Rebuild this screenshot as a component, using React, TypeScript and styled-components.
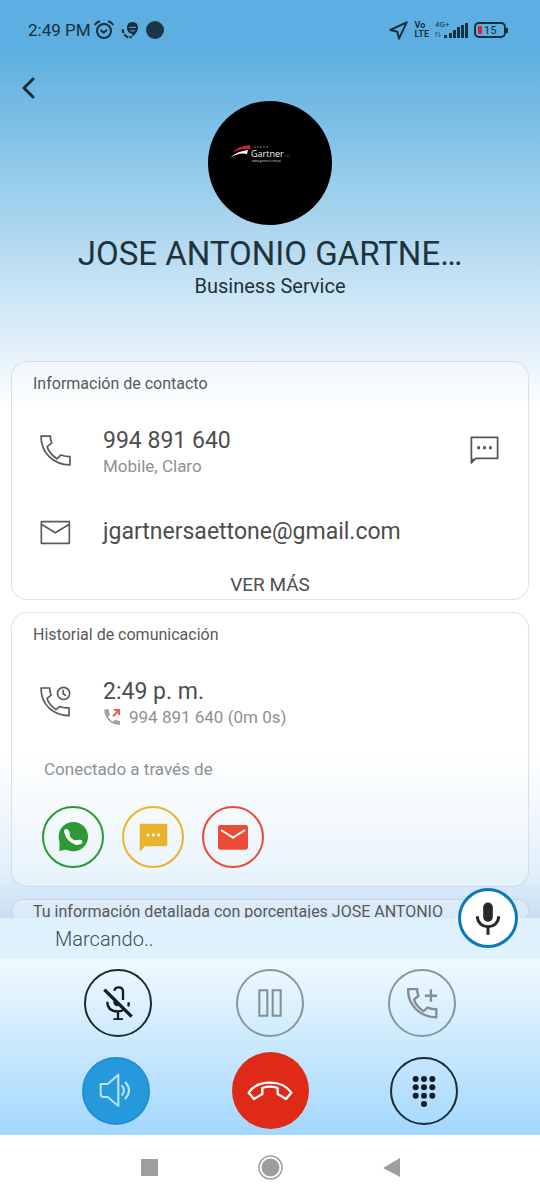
import React from "react";
import styled, { createGlobalStyle, css } from "styled-components";

const GlobalStyle = createGlobalStyle`
  *, *::before, *::after { box-sizing: border-box; }
  body { margin: 0; font-family: Roboto, "Liberation Sans", sans-serif; background: #fff; }
  button { font: inherit; color: inherit; background: none; border: 0; padding: 0; cursor: pointer; }
  svg { display: block; flex: none; }
  h1, h2, p { margin: 0; font-weight: 400; }
`;

const Screen = styled.div`
  display: flex;
  flex-direction: column;
  height: 100vh;
`;

const Content = styled.main`
  flex: 1 1 0;
  min-height: 0;
  overflow: hidden;
  background: linear-gradient(#5cafe0 50px, #fff 412px, #fff calc(100% - 165px), #e2f1fc calc(100% - 50px), #c8def4 100%);
`;

const StatusBar = styled.div`
  display: flex;
  align-items: center;
  justify-content: space-between;
  height: 60px;
  padding: 0 31px 0 28px;
  color: #16303f;
`;

const StatusGroup = styled.div<{ $gap: number }>`
  display: flex;
  align-items: center;
  gap: ${(p) => p.$gap}px;
`;

const Clock = styled.time`
  font-size: 17px;
  line-height: 20px;
  margin-right: -4px;
`;

const VoLte = styled.span`
  display: grid;
  font-size: 9px;
  line-height: 9px;
  font-weight: 700;
`;

const Header = styled.header`
  display: grid;
  grid-template-columns: 58px 1fr 58px;
  justify-items: center;
`;

const BackButton = styled.button`
  display: grid;
  place-items: center;
  width: 56px;
  height: 56px;
`;

const Avatar = styled.div`
  width: 124px;
  height: 124px;
  margin-top: 41px;
  border-radius: 50%;
  background: #000;
  overflow: hidden;
`;

const Identity = styled.div`
  margin: 9px 16px 0;
  text-align: center;
  color: #21323b;
`;

const Name = styled.h1`
  font-size: 33px;
  line-height: 40px;
  white-space: nowrap;
`;

const Tagline = styled.p`
  font-size: 20px;
  line-height: 24px;
`;

const Cards = styled.div`
  display: flex;
  flex-direction: column;
  gap: 12px;
  margin: 63px 11px 0;
`;

const Card = styled.section<{ $tight?: boolean }>`
  flex: none;
  padding: ${(p) => (p.$tight ? 2 : 12)}px 21px 0;
  border: 1px solid rgba(120, 120, 120, 0.2);
  border-radius: 16px;
  background: rgba(255, 255, 255, 0.3);
  overflow: hidden;
`;

const CardTitle = styled.h2`
  font-size: 16px;
  line-height: 20px;
  color: #56595c;
  white-space: nowrap;
`;

const Row = styled.div<{ $space: number; $twoLines?: boolean }>`
  display: grid;
  grid-template-columns: 46px 1fr auto;
  column-gap: 17px;
  align-items: center;
  margin-top: ${(p) => p.$space}px;
  padding: 0 8px 0 7px;

  > svg,
  > button {
    margin-bottom: ${(p) => (p.$twoLines ? 4 : 0)}px;
  }
`;

const Primary = styled.p`
  font-size: 23px;
  line-height: 28px;
  color: #4d4d4d;
`;

const Secondary = styled.p`
  display: flex;
  align-items: center;
  gap: 8px;
  font-size: 17px;
  line-height: 22px;
  color: #8d9194;
`;

const MoreButton = styled.button`
  display: block;
  margin: 27px auto 2px;
  font-size: 19px;
  line-height: 24px;
  color: #4f4f4f;
`;

const Via = styled.p`
  margin: 31px 0 0 11px;
  font-size: 17px;
  line-height: 20px;
  color: #8d9194;
`;

const Channels = styled.div`
  display: flex;
  gap: 18px;
  margin: 27px 0 18px 9px;
`;

const Channel = styled.button<{ $tone: string }>`
  display: grid;
  place-items: center;
  width: 62px;
  height: 62px;
  border: 2px solid ${(p) => p.$tone};
  border-radius: 50%;
  color: ${(p) => p.$tone};
`;

const CallPanel = styled.section`
  position: relative;
  flex: none;
`;

const Dialing = styled.p`
  padding: 9px 55px 7px;
  font-size: 20px;
  line-height: 25px;
  font-weight: 300;
  color: #3f4d56;
  background: #dff2fe;
`;

const VoiceButton = styled.button`
  position: absolute;
  top: -30px;
  right: 22px;
  display: grid;
  place-items: center;
  width: 60px;
  height: 60px;
  border: 3px solid #0a78bc;
  border-radius: 50%;
  background: #fff;
`;

const Controls = styled.div`
  display: grid;
  gap: 15px;
  padding: 10px 0 6px;
  background: linear-gradient(#f0faff, #a3d7fd);
`;

const ControlRow = styled.div`
  display: flex;
  align-items: center;
  justify-content: space-evenly;
`;

type Kind = "dark" | "muted" | "active" | "end";

const kinds = {
  dark: css`border: 2px solid #1d2b35; color: #111c23;`,
  muted: css`border: 2px solid #8a959c; color: #858d92;`,
  active: css`border: 2px solid #1f8fd0; background: #2599dc; color: #bfe5fb;`,
  end: css`background: #de2a17; color: #fff;`,
};

const Control = styled.button<{ $kind: Kind }>`
  display: grid;
  place-items: center;
  width: ${(p) => (p.$kind === "end" ? 77 : 68)}px;
  height: ${(p) => (p.$kind === "end" ? 77 : 68)}px;
  border-radius: 50%;
  ${(p) => kinds[p.$kind]}
`;

const NavBar = styled.nav`
  display: flex;
  flex: none;
  justify-content: center;
  align-items: center;
  gap: 81px;
  height: 65px;
  background: #fff;
  color: #9e9e9e;
`;

const NavButton = styled.button`
  display: grid;
  place-items: center;
  width: 40px;
  height: 40px;
`;

type IconProps = { w: number; h: number; box: string; sw?: number; fill?: string; children: React.ReactNode };

const Icon = ({ w, h, box, sw = 0, fill = "none", children }: IconProps) => (
  <svg
    width={w}
    height={h}
    viewBox={box}
    fill={fill}
    stroke={sw ? "currentColor" : "none"}
    strokeWidth={sw}
    strokeLinejoin="round"
    aria-hidden="true"
  >
    {children}
  </svg>
);

const HANDSET = "M3 3H30Q30 14 34 23L21 34Q25 52 49 69L61 58Q73 63 87 63V87C38 86 3 52 3 3Z";

const AvatarLogo = () => (
  <svg width="124" height="124" viewBox="0 0 124 124" role="img" aria-label="Gartner">
    <path d="M24 52Q30 45 42 44V48Q33 47 24 52Z" fill="#d8232a" />
    <path d="M22 57Q29 50 40 49L39 53Q31 51 22 57Z" fill="#fff" />
    <path d="M46 46H60" stroke="#777" strokeWidth="1" strokeDasharray="2 1" />
    <text x="43" y="56" fontSize="9" fontFamily="Open Sans, sans-serif" fill="#f4f4f4">Gartner</text>
    <text x="76" y="56" fontSize="3" fontFamily="Open Sans, sans-serif" fill="#555">S.A.C</text>
    <text x="44" y="61" fontSize="3" fontFamily="Open Sans, sans-serif" fill="#ddd">www.gartner.com.pe</text>
  </svg>
);

export default function App() {
  return (
    <>
      <GlobalStyle />
      <Screen>
        <Content>
          <StatusBar>
            <StatusGroup $gap={7}>
              <Clock>2:49 PM</Clock>
              <Icon w={20} h={20} box="0 0 60 60" sw={6}>
                <circle cx="30" cy="33" r="21" />
                <path d="M2 15Q8 6 18 4M58 15Q52 6 42 4M20 30L29 38L39 29" />
              </Icon>
              <Icon w={18} h={18} box="0 0 54 54" fill="currentColor">
                <path d="M18 22Q18 3 34 3Q51 3 51 20Q51 34 34 47V39Q18 37 18 22Z" />
                <path d="M24 19H45M28 28Q34 34 41 28" stroke="#5cafe0" strokeWidth="3" fill="none" />
                <path d="M5 25Q5 31 8 36M10 40Q15 47 22 49M27 46L31 51" stroke="currentColor" strokeWidth="7" fill="none" />
              </Icon>
              <Icon w={18} h={18} box="0 0 18 18" fill="#1c3547">
                <circle cx="9" cy="9" r="9" />
              </Icon>
            </StatusGroup>
            <StatusGroup $gap={6}>
              <Icon w={19} h={19} box="0 0 57 57" sw={6}>
                <path d="M4 27L53 4L30 53L25 32Z" />
              </Icon>
              <VoLte>
                <span>Vo</span>
                <span>LTE</span>
              </VoLte>
              <svg width="33" height="20" viewBox="0 0 33 20" fill="currentColor" role="img" aria-label="Señal 4G+">
                <text x="0" y="7" fontSize="8">4G+</text>
                <path d="M1 13V17M0 14L1 12L3 14M4 12V17M6 15L4 17" stroke="currentColor" strokeWidth="1" fill="none" opacity=".5" />
                <path d="M9 15h3v3h-3zM14 13h3v5h-3zM18 10h3v8h-3zM22 7h3v11h-3zM26 5h3v13h-3zM30 3h3v15h-3z" />
              </svg>
              <svg width="35" height="17" viewBox="0 0 35 17" role="img" aria-label="Batería 15 %">
                <rect x="1" y="1" width="30" height="14" rx="4" fill="none" stroke="currentColor" strokeWidth="2" />
                <path d="M33 6V11" stroke="currentColor" strokeWidth="2" />
                <rect x="4" y="4" width="4" height="8" rx="1" fill="#e8202a" />
                <text x="10" y="12" fontSize="11" fill="currentColor">15</text>
              </svg>
            </StatusGroup>
          </StatusBar>

          <Header>
            <BackButton aria-label="Volver">
              <Icon w={14} h={22} box="0 0 14 22" sw={3}>
                <path d="M11 2L2 11L11 20" strokeLinecap="round" stroke="#1b2c36" />
              </Icon>
            </BackButton>
            <Avatar>
              <AvatarLogo />
            </Avatar>
          </Header>
          <Identity>
            <Name>JOSE ANTONIO GARTNE…</Name>
            <Tagline>Business Service</Tagline>
          </Identity>

          <Cards>
            <Card>
              <CardTitle>Información de contacto</CardTitle>
              <Row $space={33} $twoLines>
                <Icon w={31} h={31} box="0 0 90 90" sw={5}>
                  <path d={HANDSET} stroke="#5a5a5a" />
                </Icon>
                <div>
                  <Primary>994 891 640</Primary>
                  <Secondary>Mobile, Claro</Secondary>
                </div>
                <button aria-label="Enviar mensaje">
                  <Icon w={29} h={29} box="0 0 84 84" sw={5}>
                    <path d="M4 4H80V65H16L4 78Z" stroke="#555" />
                    <path d="M4 66H15L4 78Z" fill="#555" stroke="none" />
                    <path d="M21 34H29M38 34H46M55 34H63" stroke="#555" strokeWidth="9" />
                  </Icon>
                </button>
              </Row>
              <Row $space={41}>
                <Icon w={31} h={25} box="0 0 93 75" sw={5}>
                  <path d="M4 5H88V70H4ZM4 13L46 38L88 13" stroke="#5a5a5a" />
                </Icon>
                <Primary>jgartnersaettone@gmail.com</Primary>
              </Row>
              <MoreButton>VER MÁS</MoreButton>
            </Card>

            <Card>
              <CardTitle>Historial de comunicación</CardTitle>
              <Row $space={33} $twoLines>
                <Icon w={31} h={31} box="0 0 92 92" sw={5}>
                  <g stroke="#5a5a5a">
                    <path d="M3 6H29Q29 18 33 27L21 37Q26 54 47 70L58 61Q70 66 86 65V88C40 87 3 57 3 6Z" />
                    <circle cx="70" cy="22" r="18" />
                    <path d="M69 11V23L77 29" />
                  </g>
                </Icon>
                <div>
                  <Primary>2:49 p. m.</Primary>
                  <Secondary>
                    <Icon w={18} h={18} box="0 0 54 54">
                      <path d="M4 4H15Q18 4 18 8Q18 15 21 20L15 27Q22 37 30 41L37 35Q43 38 49 38Q51 38 51 41V51C23 51 3 30 4 4Z" fill="#a0a3a5" />
                      <path d="M30 25L45 9M33 6H48V21" stroke="#e8614b" strokeWidth="6" strokeLinejoin="miter" />
                    </Icon>
                    994 891 640 (0m 0s)
                  </Secondary>
                </div>
              </Row>
              <Via>Conectado a través de</Via>
              <Channels>
                <Channel $tone="#2b9a33" aria-label="WhatsApp">
                  <Icon w={30} h={30} box="0 0 90 90" fill="currentColor">
                    <circle cx="46" cy="44" r="44" />
                    <path d="M5 57L4 87L34 80Z" />
                    <path d="M25 28L29 36M55 62L66 60" stroke="#fff" strokeWidth="14" strokeLinecap="round" />
                    <path d="M25 30Q29 56 57 63" stroke="#fff" strokeWidth="11" fill="none" />
                  </Icon>
                </Channel>
                <Channel $tone="#eab32d" aria-label="Mensaje">
                  <Icon w={29} h={29} box="0 0 87 87" fill="currentColor">
                    <path d="M6 2H80Q85 2 85 7V65Q85 70 80 70H18L2 86V7Q2 2 6 2Z" />
                    <path d="M23 36H31M39 36H47M55 36H63" stroke="#fff" strokeWidth="8" />
                  </Icon>
                </Channel>
                <Channel $tone="#eb4b37" aria-label="Correo">
                  <Icon w={30} h={25} box="0 0 90 75" fill="currentColor">
                    <rect width="90" height="74" rx="7" />
                    <path d="M9 15L45 38L81 15" stroke="#fff" strokeWidth="6" fill="none" />
                  </Icon>
                </Channel>
              </Channels>
            </Card>

            <Card $tight>
              <CardTitle>Tu información detallada con porcentajes JOSE ANTONIO</CardTitle>
            </Card>
          </Cards>
        </Content>

        <CallPanel>
          <Dialing>Marcando..</Dialing>
          <VoiceButton aria-label="Hablar">
            <Icon w={24} h={33} box="0 0 72 99" sw={9}>
              <g stroke="#292929">
                <rect x="26" y="6" width="20" height="49" rx="10" fill="#292929" />
                <path d="M4 43C4 85 68 85 68 43M36 75V98" />
              </g>
            </Icon>
          </VoiceButton>
          <Controls>
            <ControlRow>
              <Control $kind="dark" aria-label="Silenciar">
                <Icon w={30} h={34} box="0 0 90 102" sw={7}>
                  <path d="M34 14Q36 4 47 4Q60 4 60 17V42" />
                  <path d="M31 35V47Q31 58 42 61L53 57Z" fill="currentColor" stroke="none" />
                  <path d="M13 47Q13 76 45 76Q58 76 65 69M77 49V53Q77 58 75 61M45 76V100M31 100H60" />
                  <path d="M4 11L86 92" strokeWidth="10" />
                </Icon>
              </Control>
              <Control $kind="muted" aria-label="Poner en espera">
                <Icon w={24} h={28} box="0 0 72 84" sw={6}>
                  <path d="M4 4H28V80H4ZM44 4H68V80H44Z" strokeLinejoin="miter" />
                </Icon>
              </Control>
              <Control $kind="muted" aria-label="Añadir llamada">
                <Icon w={31} h={31} box="0 0 92 92" sw={7}>
                  <path d={HANDSET} />
                  <path d="M71 4V41M53 23H89" />
                </Icon>
              </Control>
            </ControlRow>
            <ControlRow>
              <Control $kind="active" aria-label="Altavoz">
                <Icon w={33} h={35} box="0 0 99 105" sw={6}>
                  <path d="M5 33H26L58 5V99L26 72H14Q5 72 5 63Z" />
                  <path d="M68 37Q82 52 68 68M78 27Q102 52 78 78" />
                </Icon>
              </Control>
              <Control $kind="end" aria-label="Colgar">
                <Icon w={46} h={20} box="0 0 138 60" sw={7}>
                  <path d="M5 35C32 -5 106 -5 133 35L117 54L92 39V21Q69 13 46 21V39L21 54Z" />
                </Icon>
              </Control>
              <Control $kind="dark" aria-label="Teclado">
                <Icon w={24} h={33} box="0 -4 72 99" fill="currentColor">
                  {[11, 36, 61].map((y) => [11, 36, 61].map((x) => <circle key={`${x}-${y}`} cx={x} cy={y} r="9" />))}
                  <circle cx="36" cy="86" r="9" />
                </Icon>
              </Control>
            </ControlRow>
          </Controls>
        </CallPanel>

        <NavBar aria-label="Sistema">
          <NavButton aria-label="Recientes">
            <Icon w={17} h={17} box="0 0 17 17" fill="currentColor">
              <rect width="17" height="17" />
            </Icon>
          </NavButton>
          <NavButton aria-label="Inicio">
            <Icon w={25} h={25} box="0 0 25 25">
              <circle cx="12.5" cy="12.5" r="11.5" stroke="currentColor" strokeWidth="1.5" />
              <circle cx="12.5" cy="12.5" r="9" fill="currentColor" />
            </Icon>
          </NavButton>
          <NavButton aria-label="Atrás">
            <Icon w={17} h={19} box="0 0 17 19" fill="currentColor">
              <path d="M0 10L17 0V19Z" />
            </Icon>
          </NavButton>
        </NavBar>
      </Screen>
    </>
  );
}
